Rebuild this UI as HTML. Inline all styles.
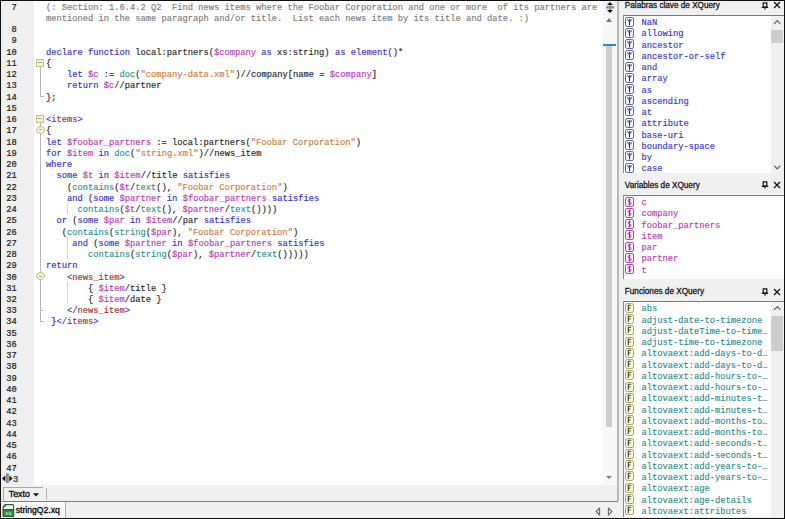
<!DOCTYPE html>
<html><head><meta charset="utf-8"><style>
*{margin:0;padding:0;box-sizing:border-box}
html,body{width:785px;height:519px;overflow:hidden;background:#f0f0f0}
#root{position:relative;width:785px;height:519px;overflow:hidden;background:#f0f0f0;font-family:"Liberation Sans",sans-serif}
#bk-top{position:absolute;left:0;top:0;width:785px;height:1px;background:#111}
#bk-left{position:absolute;left:0;top:0;width:1px;height:519px;background:#111}
#bk-right{position:absolute;left:784px;top:0;width:1px;height:519px;background:#111}
#bk-bottom{position:absolute;left:0;top:517.5px;width:785px;height:1.5px;background:#111}
#gutter{position:absolute;left:1px;top:1px;width:33px;height:484px;background:#efefef}
#code{position:absolute;left:34px;top:1px;width:569px;height:484px;background:#fff}
#codelines{position:absolute;left:0;top:0;width:603px;height:485px;overflow:hidden}
.ln{position:absolute;left:0;width:16.8px;text-align:right;font-family:"Liberation Mono",monospace;font-size:8.75px;line-height:11.24px;color:#1a1a1a;white-space:pre;-webkit-text-stroke:0.2px #1a1a1a}
.cl{position:absolute;left:46px;font-family:"Liberation Mono",monospace;font-size:8.75px;line-height:11.24px;color:#1e1e1e;white-space:pre;-webkit-text-stroke:0.15px currentColor}
.k{color:#3030c8}
.v{color:#b838b0}
.f{color:#27928e}
.s{color:#cc7a3a}
.c{color:#7a7a7a}
.t{color:#a03030}
.p{color:#4040d8}
#folds div{position:absolute}
.fbox{left:36px;width:8px;height:8px;border:1px solid #c4c094;background:#f5f3d6}
.fbox i{position:absolute;left:1px;top:2.5px;width:4px;height:1px;background:#a8a478}
.fcirc{left:36px;width:8.5px;height:8.5px;border:1px solid #c4c094;background:#f5f3d6;border-radius:50%}
.fcirc i{position:absolute;left:1.5px;top:2.8px;width:3.5px;height:1px;background:#a8a478}
.vl{left:40px;width:1px;background:#b8b8b8}
.hl{left:40px;width:4px;height:1px;background:#b8b8b8}
.guide{left:67px;width:1px;background:#d6d6d6}
#vscroll{position:absolute;left:603px;top:1px;width:14.5px;height:484px;background:#f7f7f7}
#vscroll .split{position:absolute;left:2px;top:0}
#vscroll div{position:absolute}
.thumb{left:2.8px;top:45px;width:6.2px;height:381px;background:#cdcdd0}
.blueline{left:0;top:43px;width:12.5px;height:1.5px;background:#3c82c8}
.uparr{left:2.8px;top:17px;width:0;height:0;border-left:3.7px solid transparent;border-right:3.7px solid transparent;border-bottom:4.5px solid #7c7c7c}
.dnarr{left:3px;top:474.5px;width:0;height:0;border-left:3.2px solid transparent;border-right:3.2px solid transparent;border-top:3.5px solid #7a7a88}
#ed-rborder{position:absolute;left:617.2px;top:1px;width:1.8px;height:500px;background:#b8b8b8}
#hsplit{position:absolute;left:1px;top:472.5px;width:20px;height:12px;background:#efefef}
#hsplit svg{position:absolute;left:0;top:0.5px}
.hs3{position:absolute;left:12px;top:2.2px;font-family:"Liberation Mono",monospace;font-size:8.75px;line-height:11.24px;color:#1a1a1a;-webkit-text-stroke:0.2px #1a1a1a}
#status{position:absolute;left:1px;top:485px;width:616.3px;height:15.5px;background:#f0f0f0}
#texto{position:absolute;left:2px;top:1.6px;width:40px;height:13.5px;border-top:1.2px solid #a8a8a8;border-left:1.2px solid #a8a8a8;font-size:8.8px;line-height:13px;padding-left:4.8px;color:#111;-webkit-text-stroke:0.35px #111}
#sep{position:absolute;left:45px;top:3px;width:1.2px;height:12px;background:#b4b4b4}
.tri{position:absolute;left:28.8px;top:5.4px}
#statusline{position:absolute;left:1px;top:500.5px;width:617px;height:1.2px;background:#808080}
#tabbar{position:absolute;left:1px;top:501.5px;width:621.5px;height:16px;background:#f0f0f0}
#tab{position:absolute;left:0;top:0;width:64.5px;height:16px;background:#f9f9f9;border-right:1px solid #b0b0b0}
.tname{position:absolute;left:14.8px;top:2.5px;font-size:8.6px;line-height:12px;color:#111;-webkit-text-stroke:0.35px #111}
.ficon{position:absolute;left:1px;top:2.5px}
.tarr{position:absolute;top:5.5px}
.tarr.l{left:593.5px}
.tarr.r{left:606px}
#panel{position:absolute;left:618.8px;top:0;width:165.2px;height:517.5px;background:#f0f0f0}
.ptitle{position:absolute;left:6px;width:159px;height:11px;font-size:8.2px;line-height:11px;color:#1a1a1a;white-space:pre;-webkit-text-stroke:0.3px #1a1a1a}
.pin{position:absolute;left:136.5px;top:1.6px}
.cls{position:absolute;left:148.4px;top:1.3px}
.plist{position:absolute;left:4.7px;width:160.5px;background:#fff;border-top:1.2px solid #7a7a7a;border-left:1px solid #8a8a8a;overflow:hidden}
.li{position:absolute;left:0;height:11.24px;width:150px}
.ic{position:absolute;left:0.2px;top:-1.6px}
.lt{position:absolute;left:17px;top:0;font-family:"Liberation Mono",monospace;font-size:8.75px;line-height:11.24px;white-space:pre;-webkit-text-stroke:0.15px currentColor}
.kw .lt{color:#3434d0}
.vr .lt{color:#b838b0}
.fn .lt{color:#2a8c8c}
.psb{position:absolute;left:146.5px;top:0;width:13px;height:100%;background:#f0f0f0}
.pthumb{position:absolute;left:0.5px;width:12px;background:#cdcdcd}
.chev{position:absolute;left:4px;top:5px;width:4.5px;height:4.5px;border-left:1.2px solid #505050;border-top:1.2px solid #505050;transform:rotate(45deg)}
.chev.dn{transform:rotate(225deg)}

</style></head><body>
<div id="root">
 <div id="gutter"></div>
 <div id="code"></div>
 <div id="codelines">
<div class="ln" style="top:2.75px">7</div>
<div class="ln" style="top:25.23px">8</div>
<div class="ln" style="top:36.47px">9</div>
<div class="ln" style="top:47.71px">10</div>
<div class="ln" style="top:58.95px">11</div>
<div class="ln" style="top:70.19px">12</div>
<div class="ln" style="top:81.43px">13</div>
<div class="ln" style="top:92.67px">14</div>
<div class="ln" style="top:103.91px">15</div>
<div class="ln" style="top:115.15px">16</div>
<div class="ln" style="top:126.39px">17</div>
<div class="ln" style="top:137.63px">18</div>
<div class="ln" style="top:148.87px">19</div>
<div class="ln" style="top:160.11px">20</div>
<div class="ln" style="top:171.35px">21</div>
<div class="ln" style="top:182.59px">22</div>
<div class="ln" style="top:193.83px">23</div>
<div class="ln" style="top:205.07px">24</div>
<div class="ln" style="top:216.31px">25</div>
<div class="ln" style="top:227.55px">26</div>
<div class="ln" style="top:238.79px">27</div>
<div class="ln" style="top:250.03px">28</div>
<div class="ln" style="top:261.27px">29</div>
<div class="ln" style="top:272.51px">30</div>
<div class="ln" style="top:283.75px">31</div>
<div class="ln" style="top:294.99px">32</div>
<div class="ln" style="top:306.23px">33</div>
<div class="ln" style="top:317.47px">34</div>
<div class="ln" style="top:328.71px">35</div>
<div class="ln" style="top:339.95px">36</div>
<div class="ln" style="top:351.19px">37</div>
<div class="ln" style="top:362.43px">38</div>
<div class="ln" style="top:373.67px">39</div>
<div class="ln" style="top:384.91px">40</div>
<div class="ln" style="top:396.15px">41</div>
<div class="ln" style="top:407.39px">42</div>
<div class="ln" style="top:418.63px">43</div>
<div class="ln" style="top:429.87px">44</div>
<div class="ln" style="top:441.11px">45</div>
<div class="ln" style="top:452.35px">46</div>
<div class="ln" style="top:463.59px">47</div>
<div class="ln" style="top:474.83px">48</div>
<div class="cl" style="top:2.75px"><span class="c">(: Section: 1.6.4.2 Q2  Find news items where the Foobar Corporation and one or more  of its partners are</span></div>
<div class="cl" style="top:13.99px"><span class="c">mentioned in the same paragraph and/or title.  List each news item by its title and date. :)</span></div>
<div class="cl" style="top:47.71px"><span class="k">declare</span> <span class="k">function</span> local:partners(<span class="v">$company</span> <span class="k">as</span> xs:string) <span class="k">as</span> <span class="k">element</span>()*</div>
<div class="cl" style="top:58.95px">{</div>
<div class="cl" style="top:70.19px">    <span class="k">let</span> <span class="v">$c</span> := <span class="f">doc</span>(<span class="s">"company-data.xml"</span>)//company[name = <span class="v">$company</span>]</div>
<div class="cl" style="top:81.43px">    <span class="k">return</span> <span class="v">$c</span>//partner</div>
<div class="cl" style="top:92.67px">};</div>
<div class="cl" style="top:115.15px"><span class="p">&lt;</span><span class="t">items</span><span class="p">&gt;</span></div>
<div class="cl" style="top:126.39px">{</div>
<div class="cl" style="top:137.63px"><span class="k">let</span> <span class="v">$foobar_partners</span> := local:partners(<span class="s">"Foobar Corporation"</span>)</div>
<div class="cl" style="top:148.87px"><span class="k">for</span> <span class="v">$item</span> <span class="k">in</span> <span class="f">doc</span>(<span class="s">"string.xml"</span>)//news_item</div>
<div class="cl" style="top:160.11px"><span class="k">where</span></div>
<div class="cl" style="top:171.35px">  <span class="k">some</span> <span class="v">$t</span> <span class="k">in</span> <span class="v">$item</span>//title <span class="k">satisfies</span></div>
<div class="cl" style="top:182.59px">    (<span class="f">contains</span>(<span class="v">$t</span>/<span class="f">text</span>(), <span class="s">"Foobar Corporation"</span>)</div>
<div class="cl" style="top:193.83px">    <span class="k">and</span> (<span class="k">some</span> <span class="v">$partner</span> <span class="k">in</span> <span class="v">$foobar_partners</span> <span class="k">satisfies</span></div>
<div class="cl" style="top:205.07px">      <span class="f">contains</span>(<span class="v">$t</span>/<span class="f">text</span>(), <span class="v">$partner</span>/<span class="f">text</span>())))</div>
<div class="cl" style="top:216.31px">  <span class="k">or</span> (<span class="k">some</span> <span class="v">$par</span> <span class="k">in</span> <span class="v">$item</span>//par <span class="k">satisfies</span></div>
<div class="cl" style="top:227.55px">   (<span class="f">contains</span>(<span class="f">string</span>(<span class="v">$par</span>), <span class="s">"Foobar Corporation"</span>)</div>
<div class="cl" style="top:238.79px">     <span class="k">and</span> (<span class="k">some</span> <span class="v">$partner</span> <span class="k">in</span> <span class="v">$foobar_partners</span> <span class="k">satisfies</span></div>
<div class="cl" style="top:250.03px">        <span class="f">contains</span>(<span class="f">string</span>(<span class="v">$par</span>), <span class="v">$partner</span>/<span class="f">text</span>()))))</div>
<div class="cl" style="top:261.27px"><span class="k">return</span></div>
<div class="cl" style="top:272.51px">    <span class="p">&lt;</span><span class="t">news_item</span><span class="p">&gt;</span></div>
<div class="cl" style="top:283.75px">        { <span class="v">$item</span>/title }</div>
<div class="cl" style="top:294.99px">        { <span class="v">$item</span>/date }</div>
<div class="cl" style="top:306.23px">    <span class="p">&lt;/</span><span class="t">news_item</span><span class="p">&gt;</span></div>
<div class="cl" style="top:317.47px"> }<span class="p">&lt;/</span><span class="t">items</span><span class="p">&gt;</span></div>
 </div>
 <div id="folds">
  <div class="fbox" style="top:58.5px"><i></i></div>
  <div class="vl" style="top:67px;height:29.5px"></div>
  <div class="hl" style="top:95.5px"></div>
  <div class="fbox" style="top:114.8px"><i></i></div>
  <div class="vl" style="top:123px;height:3px"></div>
  <div class="fcirc" style="top:125.5px"><i></i></div>
  <div class="vl" style="top:134px;height:187px"></div>
  <div class="hl" style="top:320.5px"></div>
  <div class="fcirc" style="top:271.8px"><i></i></div>
  <div class="hl" style="top:309.5px;width:3px"></div>
  <div class="guide" style="top:203px;height:11px"></div>
  <div class="guide" style="top:237px;height:21.5px"></div>
  <div class="guide" style="top:281.5px;height:22.5px"></div>
 </div>
 <div id="vscroll">
  <svg class="split" width="10" height="13" viewBox="0 0 10 13"><path d="M5 1L2 4H8Z" fill="#111"/><rect x="1" y="5.2" width="8" height="2.4" fill="#8a8a8a"/><path d="M5 12L2 9H8Z" fill="#111"/><path d="M5 4V5M5 7.6V9" stroke="#111" stroke-width="0.8"/></svg>
  <div class="uparr"></div>
  <div class="blueline"></div>
  <div class="thumb"></div>
  <div class="dnarr"></div>
 </div>
 <div id="ed-rborder"></div>
 <div id="hsplit"><svg width="13" height="12" viewBox="0 0 13 12"><path d="M1 5.5L4.3 2.6V8.4Z" fill="#111"/><rect x="5" y="0.5" width="2.8" height="9.5" fill="#8c8c8c"/><path d="M11.5 5.5L8.4 2.6V8.4Z" fill="#111"/></svg><span class="hs3">3</span></div>
 <div id="status">
  <div id="texto">Texto<svg class="tri" width="6" height="4" viewBox="0 0 6 4"><path d="M0 0.2H6L3 3.6Z" fill="#111"/></svg></div>
  <div id="sep"></div>
 </div>
 <div id="statusline"></div>
 <div id="tabbar">
  <div id="tab"><svg class="ficon" width="13" height="13" viewBox="0 0 13 13"><path d="M3.2 0.6H10.4Q11.6 0.6 11.6 1.8V11.4Q11.6 12.4 10.6 12.4H2.2Q1.2 12.4 1.2 11.4V2.8Z" fill="#fff" stroke="#2c5a2c" stroke-width="1.1"/><path d="M1.2 2.8H3.2V0.6" fill="none" stroke="#2c5a2c" stroke-width="0.9"/><path d="M1.2 5.6H11.6V11.4Q11.6 12.4 10.6 12.4H2.2Q1.2 12.4 1.2 11.4Z" fill="#2a9a3a" stroke="#2c5a2c" stroke-width="1.1"/><text x="6.4" y="10.8" font-family="Liberation Sans" font-size="5.2" font-weight="bold" fill="#a8e0a8" text-anchor="middle">xq</text></svg><span class="tname">stringQ2.xq</span></div>
  <svg class="tarr l" width="6" height="9" viewBox="0 0 6 9"><path d="M4.6 1L1.2 4.5L4.6 8Z" fill="none" stroke="#6a6a6a" stroke-width="1.1" stroke-linejoin="round"/></svg><svg class="tarr r" width="6" height="9" viewBox="0 0 6 9"><path d="M1.4 1L4.8 4.5L1.4 8Z" fill="none" stroke="#6a6a6a" stroke-width="1.1" stroke-linejoin="round"/></svg>
 </div>
 <div id="panel">
  <div class="ptitle" style="top:0.1px">Palabras clave de XQuery<svg class="pin" width="8" height="8" viewBox="0 0 8 8"><path d="M2.2 0.8H5.8V5.2H2.2Z" fill="none" stroke="#111" stroke-width="1.2"/><path d="M0.8 5.3H7.2M4 5.3V7.6" stroke="#111" stroke-width="1.2"/></svg><svg class="cls" width="8" height="8" viewBox="0 0 8 8"><path d="M1 1L7 7M7 1L1 7" stroke="#111" stroke-width="1.3"/></svg></div>
  <div class="plist" style="top:14.6px;height:158.8px">
   <div class="li kw" style="top:2.55px"><svg class="ic" width="9" height="10" viewBox="0 0 9 10"><rect x="0.5" y="0.5" width="8" height="9" rx="1.6" fill="#f8f9ff" stroke="#5a66a0" stroke-width="1"/><path d="M2.6 2.4Q2.8 4.3 4.5 4.4Q6.2 4.3 6.4 2.4" fill="none" stroke="#1e2a78" stroke-width="1"/><circle cx="4.5" cy="2.9" r="0.8" fill="#1e2a78"/><path d="M4.5 4.3V8.4" stroke="#1e2a78" stroke-width="1.1"/></svg><span class="lt">NaN</span></div>
<div class="li kw" style="top:13.79px"><svg class="ic" width="9" height="10" viewBox="0 0 9 10"><rect x="0.5" y="0.5" width="8" height="9" rx="1.6" fill="#f8f9ff" stroke="#5a66a0" stroke-width="1"/><path d="M2.6 2.4Q2.8 4.3 4.5 4.4Q6.2 4.3 6.4 2.4" fill="none" stroke="#1e2a78" stroke-width="1"/><circle cx="4.5" cy="2.9" r="0.8" fill="#1e2a78"/><path d="M4.5 4.3V8.4" stroke="#1e2a78" stroke-width="1.1"/></svg><span class="lt">allowing</span></div>
<div class="li kw" style="top:25.03px"><svg class="ic" width="9" height="10" viewBox="0 0 9 10"><rect x="0.5" y="0.5" width="8" height="9" rx="1.6" fill="#f8f9ff" stroke="#5a66a0" stroke-width="1"/><path d="M2.6 2.4Q2.8 4.3 4.5 4.4Q6.2 4.3 6.4 2.4" fill="none" stroke="#1e2a78" stroke-width="1"/><circle cx="4.5" cy="2.9" r="0.8" fill="#1e2a78"/><path d="M4.5 4.3V8.4" stroke="#1e2a78" stroke-width="1.1"/></svg><span class="lt">ancestor</span></div>
<div class="li kw" style="top:36.27px"><svg class="ic" width="9" height="10" viewBox="0 0 9 10"><rect x="0.5" y="0.5" width="8" height="9" rx="1.6" fill="#f8f9ff" stroke="#5a66a0" stroke-width="1"/><path d="M2.6 2.4Q2.8 4.3 4.5 4.4Q6.2 4.3 6.4 2.4" fill="none" stroke="#1e2a78" stroke-width="1"/><circle cx="4.5" cy="2.9" r="0.8" fill="#1e2a78"/><path d="M4.5 4.3V8.4" stroke="#1e2a78" stroke-width="1.1"/></svg><span class="lt">ancestor-or-self</span></div>
<div class="li kw" style="top:47.51px"><svg class="ic" width="9" height="10" viewBox="0 0 9 10"><rect x="0.5" y="0.5" width="8" height="9" rx="1.6" fill="#f8f9ff" stroke="#5a66a0" stroke-width="1"/><path d="M2.6 2.4Q2.8 4.3 4.5 4.4Q6.2 4.3 6.4 2.4" fill="none" stroke="#1e2a78" stroke-width="1"/><circle cx="4.5" cy="2.9" r="0.8" fill="#1e2a78"/><path d="M4.5 4.3V8.4" stroke="#1e2a78" stroke-width="1.1"/></svg><span class="lt">and</span></div>
<div class="li kw" style="top:58.75px"><svg class="ic" width="9" height="10" viewBox="0 0 9 10"><rect x="0.5" y="0.5" width="8" height="9" rx="1.6" fill="#f8f9ff" stroke="#5a66a0" stroke-width="1"/><path d="M2.6 2.4Q2.8 4.3 4.5 4.4Q6.2 4.3 6.4 2.4" fill="none" stroke="#1e2a78" stroke-width="1"/><circle cx="4.5" cy="2.9" r="0.8" fill="#1e2a78"/><path d="M4.5 4.3V8.4" stroke="#1e2a78" stroke-width="1.1"/></svg><span class="lt">array</span></div>
<div class="li kw" style="top:69.99px"><svg class="ic" width="9" height="10" viewBox="0 0 9 10"><rect x="0.5" y="0.5" width="8" height="9" rx="1.6" fill="#f8f9ff" stroke="#5a66a0" stroke-width="1"/><path d="M2.6 2.4Q2.8 4.3 4.5 4.4Q6.2 4.3 6.4 2.4" fill="none" stroke="#1e2a78" stroke-width="1"/><circle cx="4.5" cy="2.9" r="0.8" fill="#1e2a78"/><path d="M4.5 4.3V8.4" stroke="#1e2a78" stroke-width="1.1"/></svg><span class="lt">as</span></div>
<div class="li kw" style="top:81.23px"><svg class="ic" width="9" height="10" viewBox="0 0 9 10"><rect x="0.5" y="0.5" width="8" height="9" rx="1.6" fill="#f8f9ff" stroke="#5a66a0" stroke-width="1"/><path d="M2.6 2.4Q2.8 4.3 4.5 4.4Q6.2 4.3 6.4 2.4" fill="none" stroke="#1e2a78" stroke-width="1"/><circle cx="4.5" cy="2.9" r="0.8" fill="#1e2a78"/><path d="M4.5 4.3V8.4" stroke="#1e2a78" stroke-width="1.1"/></svg><span class="lt">ascending</span></div>
<div class="li kw" style="top:92.47px"><svg class="ic" width="9" height="10" viewBox="0 0 9 10"><rect x="0.5" y="0.5" width="8" height="9" rx="1.6" fill="#f8f9ff" stroke="#5a66a0" stroke-width="1"/><path d="M2.6 2.4Q2.8 4.3 4.5 4.4Q6.2 4.3 6.4 2.4" fill="none" stroke="#1e2a78" stroke-width="1"/><circle cx="4.5" cy="2.9" r="0.8" fill="#1e2a78"/><path d="M4.5 4.3V8.4" stroke="#1e2a78" stroke-width="1.1"/></svg><span class="lt">at</span></div>
<div class="li kw" style="top:103.71px"><svg class="ic" width="9" height="10" viewBox="0 0 9 10"><rect x="0.5" y="0.5" width="8" height="9" rx="1.6" fill="#f8f9ff" stroke="#5a66a0" stroke-width="1"/><path d="M2.6 2.4Q2.8 4.3 4.5 4.4Q6.2 4.3 6.4 2.4" fill="none" stroke="#1e2a78" stroke-width="1"/><circle cx="4.5" cy="2.9" r="0.8" fill="#1e2a78"/><path d="M4.5 4.3V8.4" stroke="#1e2a78" stroke-width="1.1"/></svg><span class="lt">attribute</span></div>
<div class="li kw" style="top:114.95px"><svg class="ic" width="9" height="10" viewBox="0 0 9 10"><rect x="0.5" y="0.5" width="8" height="9" rx="1.6" fill="#f8f9ff" stroke="#5a66a0" stroke-width="1"/><path d="M2.6 2.4Q2.8 4.3 4.5 4.4Q6.2 4.3 6.4 2.4" fill="none" stroke="#1e2a78" stroke-width="1"/><circle cx="4.5" cy="2.9" r="0.8" fill="#1e2a78"/><path d="M4.5 4.3V8.4" stroke="#1e2a78" stroke-width="1.1"/></svg><span class="lt">base-uri</span></div>
<div class="li kw" style="top:126.19px"><svg class="ic" width="9" height="10" viewBox="0 0 9 10"><rect x="0.5" y="0.5" width="8" height="9" rx="1.6" fill="#f8f9ff" stroke="#5a66a0" stroke-width="1"/><path d="M2.6 2.4Q2.8 4.3 4.5 4.4Q6.2 4.3 6.4 2.4" fill="none" stroke="#1e2a78" stroke-width="1"/><circle cx="4.5" cy="2.9" r="0.8" fill="#1e2a78"/><path d="M4.5 4.3V8.4" stroke="#1e2a78" stroke-width="1.1"/></svg><span class="lt">boundary-space</span></div>
<div class="li kw" style="top:137.43px"><svg class="ic" width="9" height="10" viewBox="0 0 9 10"><rect x="0.5" y="0.5" width="8" height="9" rx="1.6" fill="#f8f9ff" stroke="#5a66a0" stroke-width="1"/><path d="M2.6 2.4Q2.8 4.3 4.5 4.4Q6.2 4.3 6.4 2.4" fill="none" stroke="#1e2a78" stroke-width="1"/><circle cx="4.5" cy="2.9" r="0.8" fill="#1e2a78"/><path d="M4.5 4.3V8.4" stroke="#1e2a78" stroke-width="1.1"/></svg><span class="lt">by</span></div>
<div class="li kw" style="top:148.67px"><svg class="ic" width="9" height="10" viewBox="0 0 9 10"><rect x="0.5" y="0.5" width="8" height="9" rx="1.6" fill="#f8f9ff" stroke="#5a66a0" stroke-width="1"/><path d="M2.6 2.4Q2.8 4.3 4.5 4.4Q6.2 4.3 6.4 2.4" fill="none" stroke="#1e2a78" stroke-width="1"/><circle cx="4.5" cy="2.9" r="0.8" fill="#1e2a78"/><path d="M4.5 4.3V8.4" stroke="#1e2a78" stroke-width="1.1"/></svg><span class="lt">case</span></div>
   <div class="psb"><span class="chev up"></span><span class="pthumb" style="top:14px;height:13.5px"></span><span class="chev dn" style="top:148px"></span></div>
  </div>
  <div class="ptitle" style="top:179.7px">Variables de XQuery<svg class="pin" width="8" height="8" viewBox="0 0 8 8"><path d="M2.2 0.8H5.8V5.2H2.2Z" fill="none" stroke="#111" stroke-width="1.2"/><path d="M0.8 5.3H7.2M4 5.3V7.6" stroke="#111" stroke-width="1.2"/></svg><svg class="cls" width="8" height="8" viewBox="0 0 8 8"><path d="M1 1L7 7M7 1L1 7" stroke="#111" stroke-width="1.3"/></svg></div>
  <div class="plist" style="top:194.7px;height:84.3px">
   <div class="li vr" style="top:2.55px"><svg class="ic" width="9" height="10" viewBox="0 0 9 10"><rect x="0.5" y="0.5" width="8" height="9" rx="1.5" fill="#fbf0fb" stroke="#b048b0" stroke-width="1"/><path d="M6 3.1C5.6 2.4 3 2.2 3 3.6S6.1 4.9 6.1 6.3S3.4 7.6 2.9 6.9M4.5 1.6V8.4" fill="none" stroke="#a028a0" stroke-width="0.95"/></svg><span class="lt">c</span></div>
<div class="li vr" style="top:13.79px"><svg class="ic" width="9" height="10" viewBox="0 0 9 10"><rect x="0.5" y="0.5" width="8" height="9" rx="1.5" fill="#fbf0fb" stroke="#b048b0" stroke-width="1"/><path d="M6 3.1C5.6 2.4 3 2.2 3 3.6S6.1 4.9 6.1 6.3S3.4 7.6 2.9 6.9M4.5 1.6V8.4" fill="none" stroke="#a028a0" stroke-width="0.95"/></svg><span class="lt">company</span></div>
<div class="li vr" style="top:25.03px"><svg class="ic" width="9" height="10" viewBox="0 0 9 10"><rect x="0.5" y="0.5" width="8" height="9" rx="1.5" fill="#fbf0fb" stroke="#b048b0" stroke-width="1"/><path d="M6 3.1C5.6 2.4 3 2.2 3 3.6S6.1 4.9 6.1 6.3S3.4 7.6 2.9 6.9M4.5 1.6V8.4" fill="none" stroke="#a028a0" stroke-width="0.95"/></svg><span class="lt">foobar_partners</span></div>
<div class="li vr" style="top:36.27px"><svg class="ic" width="9" height="10" viewBox="0 0 9 10"><rect x="0.5" y="0.5" width="8" height="9" rx="1.5" fill="#fbf0fb" stroke="#b048b0" stroke-width="1"/><path d="M6 3.1C5.6 2.4 3 2.2 3 3.6S6.1 4.9 6.1 6.3S3.4 7.6 2.9 6.9M4.5 1.6V8.4" fill="none" stroke="#a028a0" stroke-width="0.95"/></svg><span class="lt">item</span></div>
<div class="li vr" style="top:47.51px"><svg class="ic" width="9" height="10" viewBox="0 0 9 10"><rect x="0.5" y="0.5" width="8" height="9" rx="1.5" fill="#fbf0fb" stroke="#b048b0" stroke-width="1"/><path d="M6 3.1C5.6 2.4 3 2.2 3 3.6S6.1 4.9 6.1 6.3S3.4 7.6 2.9 6.9M4.5 1.6V8.4" fill="none" stroke="#a028a0" stroke-width="0.95"/></svg><span class="lt">par</span></div>
<div class="li vr" style="top:58.75px"><svg class="ic" width="9" height="10" viewBox="0 0 9 10"><rect x="0.5" y="0.5" width="8" height="9" rx="1.5" fill="#fbf0fb" stroke="#b048b0" stroke-width="1"/><path d="M6 3.1C5.6 2.4 3 2.2 3 3.6S6.1 4.9 6.1 6.3S3.4 7.6 2.9 6.9M4.5 1.6V8.4" fill="none" stroke="#a028a0" stroke-width="0.95"/></svg><span class="lt">partner</span></div>
<div class="li vr" style="top:69.99px"><svg class="ic" width="9" height="10" viewBox="0 0 9 10"><rect x="0.5" y="0.5" width="8" height="9" rx="1.5" fill="#fbf0fb" stroke="#b048b0" stroke-width="1"/><path d="M6 3.1C5.6 2.4 3 2.2 3 3.6S6.1 4.9 6.1 6.3S3.4 7.6 2.9 6.9M4.5 1.6V8.4" fill="none" stroke="#a028a0" stroke-width="0.95"/></svg><span class="lt">t</span></div>
  </div>
  <div class="ptitle" style="top:286.3px">Funciones de XQuery<svg class="pin" width="8" height="8" viewBox="0 0 8 8"><path d="M2.2 0.8H5.8V5.2H2.2Z" fill="none" stroke="#111" stroke-width="1.2"/><path d="M0.8 5.3H7.2M4 5.3V7.6" stroke="#111" stroke-width="1.2"/></svg><svg class="cls" width="8" height="8" viewBox="0 0 8 8"><path d="M1 1L7 7M7 1L1 7" stroke="#111" stroke-width="1.3"/></svg></div>
  <div class="plist" style="top:300.9px;height:216.6px">
   <div class="li fn" style="top:2.55px"><svg class="ic" width="9" height="10" viewBox="0 0 9 10"><rect x="0.5" y="0.5" width="8" height="9" rx="1.8" fill="#fafadc" stroke="#a8a468" stroke-width="1"/><path d="M3.3 8V2.3H6.2M3.3 5H5.6" fill="none" stroke="#40401a" stroke-width="1.1"/></svg><span class="lt">abs</span></div>
<div class="li fn" style="top:13.79px"><svg class="ic" width="9" height="10" viewBox="0 0 9 10"><rect x="0.5" y="0.5" width="8" height="9" rx="1.8" fill="#fafadc" stroke="#a8a468" stroke-width="1"/><path d="M3.3 8V2.3H6.2M3.3 5H5.6" fill="none" stroke="#40401a" stroke-width="1.1"/></svg><span class="lt">adjust-date-to-timezone</span></div>
<div class="li fn" style="top:25.03px"><svg class="ic" width="9" height="10" viewBox="0 0 9 10"><rect x="0.5" y="0.5" width="8" height="9" rx="1.8" fill="#fafadc" stroke="#a8a468" stroke-width="1"/><path d="M3.3 8V2.3H6.2M3.3 5H5.6" fill="none" stroke="#40401a" stroke-width="1.1"/></svg><span class="lt">adjust-dateTime-to-time…</span></div>
<div class="li fn" style="top:36.27px"><svg class="ic" width="9" height="10" viewBox="0 0 9 10"><rect x="0.5" y="0.5" width="8" height="9" rx="1.8" fill="#fafadc" stroke="#a8a468" stroke-width="1"/><path d="M3.3 8V2.3H6.2M3.3 5H5.6" fill="none" stroke="#40401a" stroke-width="1.1"/></svg><span class="lt">adjust-time-to-timezone</span></div>
<div class="li fn" style="top:47.51px"><svg class="ic" width="9" height="10" viewBox="0 0 9 10"><rect x="0.5" y="0.5" width="8" height="9" rx="1.8" fill="#fafadc" stroke="#a8a468" stroke-width="1"/><path d="M3.3 8V2.3H6.2M3.3 5H5.6" fill="none" stroke="#40401a" stroke-width="1.1"/></svg><span class="lt">altovaext:add-days-to-d…</span></div>
<div class="li fn" style="top:58.75px"><svg class="ic" width="9" height="10" viewBox="0 0 9 10"><rect x="0.5" y="0.5" width="8" height="9" rx="1.8" fill="#fafadc" stroke="#a8a468" stroke-width="1"/><path d="M3.3 8V2.3H6.2M3.3 5H5.6" fill="none" stroke="#40401a" stroke-width="1.1"/></svg><span class="lt">altovaext:add-days-to-d…</span></div>
<div class="li fn" style="top:69.99px"><svg class="ic" width="9" height="10" viewBox="0 0 9 10"><rect x="0.5" y="0.5" width="8" height="9" rx="1.8" fill="#fafadc" stroke="#a8a468" stroke-width="1"/><path d="M3.3 8V2.3H6.2M3.3 5H5.6" fill="none" stroke="#40401a" stroke-width="1.1"/></svg><span class="lt">altovaext:add-hours-to-…</span></div>
<div class="li fn" style="top:81.23px"><svg class="ic" width="9" height="10" viewBox="0 0 9 10"><rect x="0.5" y="0.5" width="8" height="9" rx="1.8" fill="#fafadc" stroke="#a8a468" stroke-width="1"/><path d="M3.3 8V2.3H6.2M3.3 5H5.6" fill="none" stroke="#40401a" stroke-width="1.1"/></svg><span class="lt">altovaext:add-hours-to-…</span></div>
<div class="li fn" style="top:92.47px"><svg class="ic" width="9" height="10" viewBox="0 0 9 10"><rect x="0.5" y="0.5" width="8" height="9" rx="1.8" fill="#fafadc" stroke="#a8a468" stroke-width="1"/><path d="M3.3 8V2.3H6.2M3.3 5H5.6" fill="none" stroke="#40401a" stroke-width="1.1"/></svg><span class="lt">altovaext:add-minutes-t…</span></div>
<div class="li fn" style="top:103.71px"><svg class="ic" width="9" height="10" viewBox="0 0 9 10"><rect x="0.5" y="0.5" width="8" height="9" rx="1.8" fill="#fafadc" stroke="#a8a468" stroke-width="1"/><path d="M3.3 8V2.3H6.2M3.3 5H5.6" fill="none" stroke="#40401a" stroke-width="1.1"/></svg><span class="lt">altovaext:add-minutes-t…</span></div>
<div class="li fn" style="top:114.95px"><svg class="ic" width="9" height="10" viewBox="0 0 9 10"><rect x="0.5" y="0.5" width="8" height="9" rx="1.8" fill="#fafadc" stroke="#a8a468" stroke-width="1"/><path d="M3.3 8V2.3H6.2M3.3 5H5.6" fill="none" stroke="#40401a" stroke-width="1.1"/></svg><span class="lt">altovaext:add-months-to…</span></div>
<div class="li fn" style="top:126.19px"><svg class="ic" width="9" height="10" viewBox="0 0 9 10"><rect x="0.5" y="0.5" width="8" height="9" rx="1.8" fill="#fafadc" stroke="#a8a468" stroke-width="1"/><path d="M3.3 8V2.3H6.2M3.3 5H5.6" fill="none" stroke="#40401a" stroke-width="1.1"/></svg><span class="lt">altovaext:add-months-to…</span></div>
<div class="li fn" style="top:137.43px"><svg class="ic" width="9" height="10" viewBox="0 0 9 10"><rect x="0.5" y="0.5" width="8" height="9" rx="1.8" fill="#fafadc" stroke="#a8a468" stroke-width="1"/><path d="M3.3 8V2.3H6.2M3.3 5H5.6" fill="none" stroke="#40401a" stroke-width="1.1"/></svg><span class="lt">altovaext:add-seconds-t…</span></div>
<div class="li fn" style="top:148.67px"><svg class="ic" width="9" height="10" viewBox="0 0 9 10"><rect x="0.5" y="0.5" width="8" height="9" rx="1.8" fill="#fafadc" stroke="#a8a468" stroke-width="1"/><path d="M3.3 8V2.3H6.2M3.3 5H5.6" fill="none" stroke="#40401a" stroke-width="1.1"/></svg><span class="lt">altovaext:add-seconds-t…</span></div>
<div class="li fn" style="top:159.91px"><svg class="ic" width="9" height="10" viewBox="0 0 9 10"><rect x="0.5" y="0.5" width="8" height="9" rx="1.8" fill="#fafadc" stroke="#a8a468" stroke-width="1"/><path d="M3.3 8V2.3H6.2M3.3 5H5.6" fill="none" stroke="#40401a" stroke-width="1.1"/></svg><span class="lt">altovaext:add-years-to-…</span></div>
<div class="li fn" style="top:171.15px"><svg class="ic" width="9" height="10" viewBox="0 0 9 10"><rect x="0.5" y="0.5" width="8" height="9" rx="1.8" fill="#fafadc" stroke="#a8a468" stroke-width="1"/><path d="M3.3 8V2.3H6.2M3.3 5H5.6" fill="none" stroke="#40401a" stroke-width="1.1"/></svg><span class="lt">altovaext:add-years-to-…</span></div>
<div class="li fn" style="top:182.39px"><svg class="ic" width="9" height="10" viewBox="0 0 9 10"><rect x="0.5" y="0.5" width="8" height="9" rx="1.8" fill="#fafadc" stroke="#a8a468" stroke-width="1"/><path d="M3.3 8V2.3H6.2M3.3 5H5.6" fill="none" stroke="#40401a" stroke-width="1.1"/></svg><span class="lt">altovaext:age</span></div>
<div class="li fn" style="top:193.63px"><svg class="ic" width="9" height="10" viewBox="0 0 9 10"><rect x="0.5" y="0.5" width="8" height="9" rx="1.8" fill="#fafadc" stroke="#a8a468" stroke-width="1"/><path d="M3.3 8V2.3H6.2M3.3 5H5.6" fill="none" stroke="#40401a" stroke-width="1.1"/></svg><span class="lt">altovaext:age-details</span></div>
<div class="li fn" style="top:204.87px"><svg class="ic" width="9" height="10" viewBox="0 0 9 10"><rect x="0.5" y="0.5" width="8" height="9" rx="1.8" fill="#fafadc" stroke="#a8a468" stroke-width="1"/><path d="M3.3 8V2.3H6.2M3.3 5H5.6" fill="none" stroke="#40401a" stroke-width="1.1"/></svg><span class="lt">altovaext:attributes</span></div>
   <div class="psb"><span class="chev up"></span><span class="pthumb" style="top:14px;height:35px"></span></div>
  </div>
 </div>
 <div id="bk-top"></div><div id="bk-left"></div><div id="bk-right"></div><div id="bk-bottom"></div>
</div>
</body></html>
